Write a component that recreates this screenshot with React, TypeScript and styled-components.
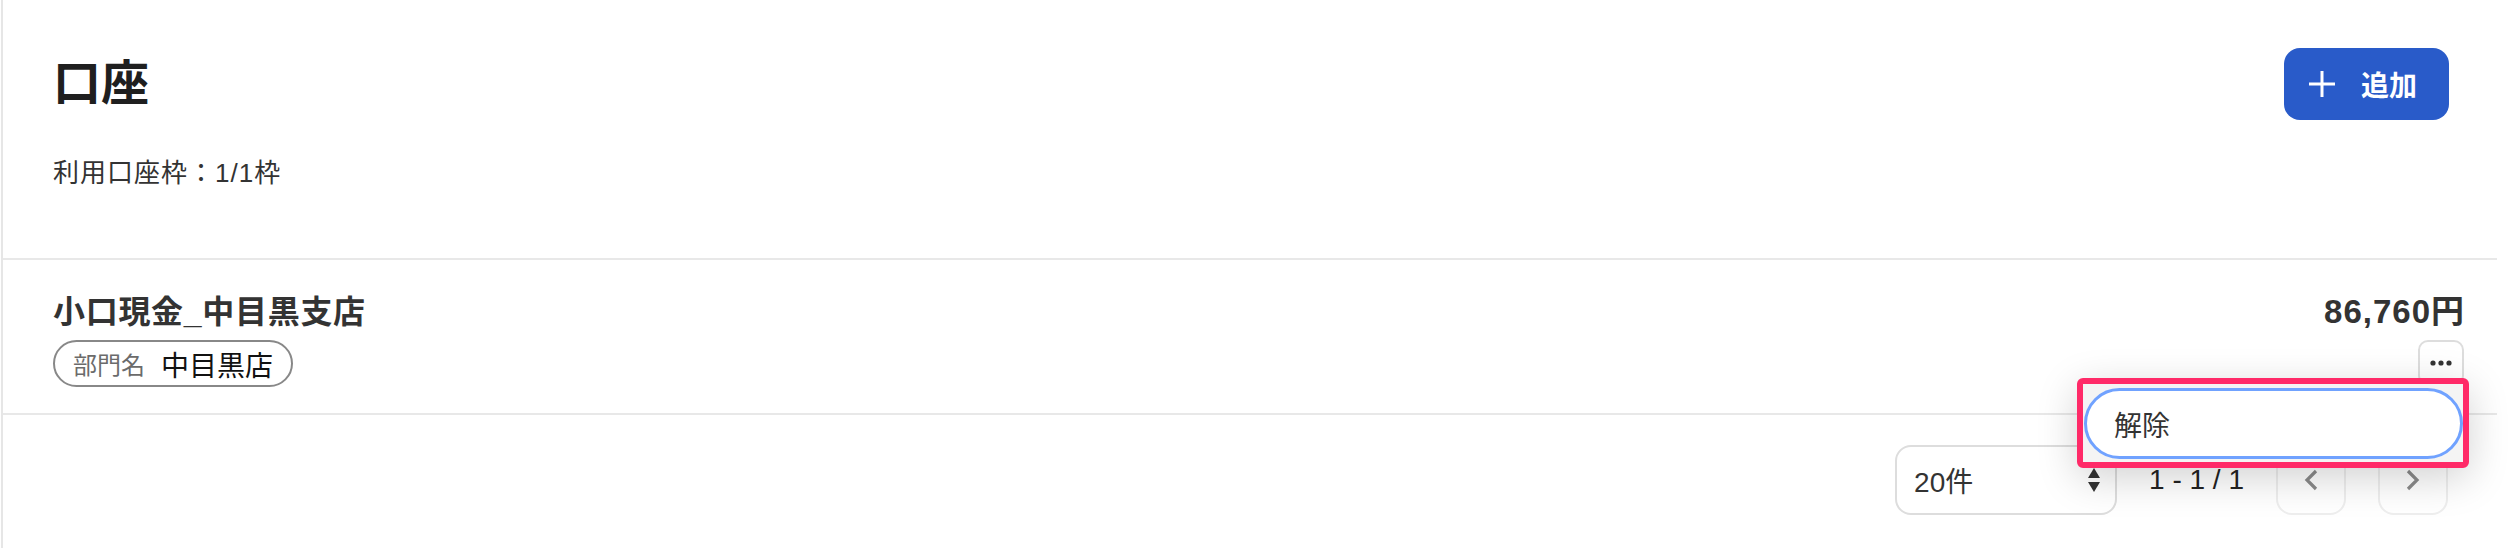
import styled, { createGlobalStyle } from "styled-components";

const GlobalStyle = createGlobalStyle`
  html, body {
    margin: 0;
    padding: 0;
    background: #ffffff;
  }
  body {
    font-family: "Liberation Sans", "Noto Sans CJK JP", sans-serif;
    color: #333333;
  }
`;

const Page = styled.div`
  box-sizing: border-box;
  width: 2496px;
  min-height: 548px;
  margin-left: 1px;
  border-left: 2px solid #e6e6e6;
  background: #ffffff;
`;

const Header = styled.header`
  display: flex;
  justify-content: space-between;
  align-items: flex-start;
  padding: 48px 48px 65px 50px;
  border-bottom: 2px solid #e8e8e8;
`;

const Title = styled.h1`
  margin: 0;
  font-size: 48px;
  line-height: 72px;
  font-weight: 700;
  color: #1f1f1f;
`;

const Quota = styled.p`
  margin: 34px 0 0;
  font-size: 26px;
  line-height: 39px;
  letter-spacing: 1px;
  color: #333333;
`;

const AddButton = styled.button`
  display: flex;
  align-items: center;
  gap: 26px;
  height: 72px;
  padding: 0 32px 0 25px;
  border: none;
  border-radius: 16px;
  background: #295bc9;
  color: #ffffff;
  font-family: inherit;
  font-size: 28px;
  font-weight: 700;
  cursor: pointer;
`;

const Row = styled.div`
  position: relative;
  display: flex;
  justify-content: space-between;
  padding: 32px 33px 26px 50px;
  border-bottom: 2px solid #e8e8e8;
`;

const Column = styled.div<{ $align?: string }>`
  display: flex;
  flex-direction: column;
  align-items: ${(p) => p.$align || "flex-start"};
  gap: 8px;
`;

const AccountName = styled.div`
  font-size: 32px;
  line-height: 40px;
  font-weight: 700;
  letter-spacing: 0.7px;
  color: #333333;
`;

const Tag = styled.div`
  box-sizing: border-box;
  display: flex;
  align-items: center;
  gap: 16px;
  height: 47px;
  padding: 0 18px;
  border: 2px solid #888888;
  border-radius: 24px;
`;

const TagLabel = styled.span`
  font-size: 24px;
  color: #6b6b6b;
`;

const TagValue = styled.span`
  font-size: 28px;
  color: #111111;
`;

const Amount = styled.div`
  font-size: 33px;
  line-height: 40px;
  font-weight: 700;
  letter-spacing: 1px;
  margin-right: -1px;
  color: #333333;
`;

const MoreButton = styled.button`
  box-sizing: border-box;
  display: flex;
  align-items: center;
  justify-content: center;
  width: 46px;
  height: 46px;
  padding: 0;
  border: 2px solid #dddddd;
  border-radius: 10px;
  background: #ffffff;
`;

const Menu = styled.div`
  position: absolute;
  top: 118px;
  right: 28px;
  box-sizing: border-box;
  width: 392px;
  height: 90px;
  padding: 4px 0 3px 1px;
  border: 6px solid #ff2a68;
  border-radius: 6px;
  background: #f4f4f4;
  box-shadow: 0 10px 40px rgba(0, 0, 0, 0.18);
  z-index: 2;
`;

const MenuItem = styled.div`
  box-sizing: border-box;
  display: flex;
  align-items: center;
  height: 100%;
  padding-left: 27px;
  border: 3px solid #70a2ff;
  border-radius: 36px;
  background: #ffffff;
  font-size: 28px;
  color: #333333;
`;

const Footer = styled.div`
  display: flex;
  justify-content: flex-end;
  align-items: center;
  gap: 32px;
  padding: 30px 49px 0;
`;

const Select = styled.div`
  box-sizing: border-box;
  display: flex;
  align-items: center;
  justify-content: space-between;
  width: 222px;
  height: 70px;
  padding: 0 15px 0 17px;
  border: 2px solid #dddddd;
  border-radius: 16px;
  font-size: 28px;
  color: #333333;
`;

const PageInfo = styled.span`
  font-size: 28px;
  color: #222222;
  white-space: pre;
`;

const NavButton = styled.button`
  box-sizing: border-box;
  display: flex;
  align-items: center;
  justify-content: center;
  width: 70px;
  height: 70px;
  padding: 0;
  border: 2px solid #eeeeee;
  border-radius: 16px;
  background: #ffffff;
`;

const PlusIcon = () => (
  <svg width="26" height="26" viewBox="0 0 26 26">
    <path d="M13 0v26M0 13h26" stroke="#ffffff" strokeWidth="3" />
  </svg>
);

const Dots = () => (
  <svg width="22" height="6" viewBox="0 0 22 6">
    <circle cx="3" cy="3" r="2.6" fill="#333" />
    <circle cx="11" cy="3" r="2.6" fill="#333" />
    <circle cx="19" cy="3" r="2.6" fill="#333" />
  </svg>
);

const SortArrows = () => (
  <svg width="12" height="24" viewBox="0 0 12 24">
    <path d="M6 0L12 10H0Z" fill="#333" />
    <path d="M6 24L12 14H0Z" fill="#333" />
  </svg>
);

const Chevron = ({ dir }: { dir: "left" | "right" }) => (
  <svg width="16" height="22" viewBox="0 0 16 22">
    <path
      d={dir === "left" ? "M13 2L4 11l9 9" : "M3 2l9 9-9 9"}
      fill="none"
      stroke="#8a8a8a"
      strokeWidth="3.2"
    />
  </svg>
);

export default function App() {
  return (
    <>
      <GlobalStyle />
      <Page>
        <Header>
          <div>
            <Title>口座</Title>
            <Quota>利用口座枠：1/1枠</Quota>
          </div>
          <AddButton>
            <PlusIcon />
            追加
          </AddButton>
        </Header>

        <Row>
          <Column>
            <AccountName>小口現金_中目黒支店</AccountName>
            <Tag>
              <TagLabel>部門名</TagLabel>
              <TagValue>中目黒店</TagValue>
            </Tag>
          </Column>
          <Column $align="flex-end">
            <Amount>86,760円</Amount>
            <MoreButton>
              <Dots />
            </MoreButton>
          </Column>
          <Menu>
            <MenuItem>解除</MenuItem>
          </Menu>
        </Row>

        <Footer>
          <Select>
            <span>20件</span>
            <SortArrows />
          </Select>
          <PageInfo>1 - 1 / 1</PageInfo>
          <NavButton>
            <Chevron dir="left" />
          </NavButton>
          <NavButton>
            <Chevron dir="right" />
          </NavButton>
        </Footer>
      </Page>
    </>
  );
}
